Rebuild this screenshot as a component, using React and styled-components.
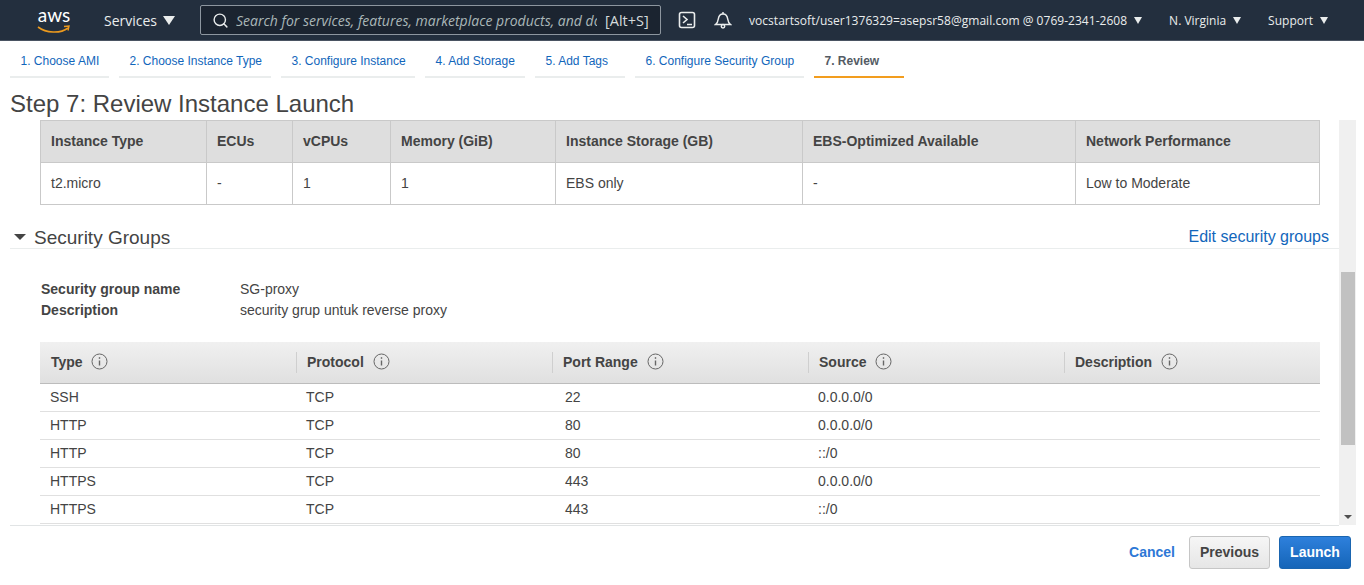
import React from "react";
import styled, { createGlobalStyle } from "styled-components";
import { Search } from "lucide-react";

const Global = createGlobalStyle`
  html, body { margin: 0; height: 585px; overflow: hidden; background: #fff; }
  body { font-family: "Liberation Sans", Arial, sans-serif; color: #444; }
  #root { height: 585px; display: flex; flex-direction: column; }
  * { box-sizing: border-box; }
`;

const NAV_FONT = `"Open Sans", "Noto Sans", sans-serif`;

const Nav = styled.header`
  height: 41px; flex: none; display: flex; align-items: center;
  background: #232f3e; border-bottom: 1px solid #4a5462;
  color: #eaeded; font-family: ${NAV_FONT};
`;
const Logo = styled.div`
  width: 34px; margin-left: 37px; height: 32px;
  display: flex; flex-direction: column; align-items: center;
`;
const LogoText = styled.span`
  font-family: "Lato", sans-serif; font-size: 19px; line-height: 20px; color: #fff;
  margin-top: 1px;
`;
const Menu = styled.div`
  display: flex; align-items: center; font-size: ${p => p.$size || 13}px; white-space: nowrap;
  margin-left: ${p => p.$left}px; gap: ${p => p.$gap || 7}px;
  letter-spacing: ${p => p.$track || 0}px;
`;
const Caret = styled.i`
  display: block; width: 0; height: 0;
  border-left: ${p => p.$w || 5}px solid transparent; border-right: ${p => p.$w || 5}px solid transparent;
  border-top: ${p => p.$h || 8}px solid #eaeded;
`;
const SearchBox = styled.div`
  width: 461px; height: 30px; margin-left: 25px; display: flex; align-items: center;
  background: #1b2430; border: 1px solid #8d969f; border-radius: 2px; padding-left: 11px;
`;
const Placeholder = styled.div`
  width: 361px; margin-left: 7px; overflow: hidden; white-space: nowrap;
  font-style: italic; font-size: 14px; color: #aab7b8;
`;
const Hint = styled.span`
  margin-left: 8px; font-size: 14.5px; color: #d5dbdb; white-space: nowrap;
`;
const IconSlot = styled.svg`
  display: block; flex: none; margin-left: ${p => p.$left}px;
`;

const Steps = styled.nav`
  flex: none; display: flex; gap: 10px; padding: 0 0 0 10px; height: 37px;
`;
const Step = styled.div`
  width: ${p => p.$w}px; height: 37px; padding: 13px 0 0 10.5px; font-size: 12px; line-height: 14px;
  white-space: nowrap; color: ${p => p.$active ? "#545b64" : "#1166bb"};
  font-weight: ${p => p.$active ? 700 : 400};
  border-bottom: 2px solid ${p => p.$active ? "#f29d1e" : "#eaeded"};
`;
const Title = styled.h1`
  flex: none; margin: 0; padding: 12px 0 0 10px; height: 42px; font-weight: 400; font-size: 24px;
  line-height: 28px; color: #444;
`;

const Body = styled.div`
  flex: none; height: 406px; display: flex; padding-left: 10px; padding-right: 8px;
`;
const Pane = styled.main`
  width: 1329px; height: 406px; overflow: hidden; border-bottom: 1px solid #e1e4e5;
`;
const Track = styled.div`
  width: 17px; height: 405px; background: #f0f0f0; display: flex; flex-direction: column; align-items: center;
`;
const Thumb = styled.div`
  width: 14px; height: 173px; margin-top: 152px; background: #c1c1c1;
`;
const TrackArrow = styled.i`
  display: block; width: 0; height: 0; margin-top: auto; margin-bottom: 6px;
  border-left: 4px solid transparent; border-right: 4px solid transparent; border-top: 4px solid #505050;
`;

const COLS1 = "165px 86px 98px 165px 247px 273px 1fr";
const SpecTable = styled.div`
  margin-left: 30px; width: 1280px; border: 1px solid #c9c9c9;
`;
const SpecRow = styled.div`
  display: grid; grid-template-columns: ${COLS1}; height: ${p => p.$h}px;
  background: ${p => p.$head ? "#dedede" : "#fff"};
  ${p => p.$head ? "border-bottom: 1px solid #c9c9c9;" : ""}
`;
const SpecCell = styled.div`
  display: flex; align-items: center; padding: 0 0 2px 10px; font-size: 14px;
  font-weight: ${p => p.$head ? 700 : 400};
  color: #444; border-left: 1px solid #c9c9c9;
  &:first-child { border-left: 0; }
`;

const SectionHead = styled.div`
  margin-top: 20px; height: 24px; display: flex; align-items: flex-start; border-bottom: 1px solid #eaeded;
`;
const SectionCaret = styled.i`
  display: block; width: 0; height: 0; margin: 9px 0 0 4px;
  border-left: 6px solid transparent; border-right: 6px solid transparent; border-top: 6px solid #444;
`;
const SectionTitle = styled.h2`
  margin: 2px 0 0 8px; font-weight: 400; font-size: 19px; line-height: 21px; color: #444;
`;
const EditLink = styled.a`
  margin: 2px 10px 0 auto; font-size: 16px; line-height: 20px; color: #1166bb;
`;
const Meta = styled.dl`
  margin: 32px 0 0 31px; display: grid; grid-template-columns: 199px 1fr; row-gap: 5px;
  font-size: 14px; line-height: 16px; color: #444;
  dt { font-weight: 700; margin: 0; } dd { margin: 0; }
`;

const COLS2 = "256px 256px 256px 256px 1fr";
const SgHead = styled.div`
  margin: 24px 0 0 30px; width: 1280px; height: 42px; display: grid; grid-template-columns: ${COLS2};
  align-items: center; background: linear-gradient(#f0f0f0, #e0e0e0);
  border-bottom: 1px solid #bcbcbc;
`;
const SgHeadCell = styled.div`
  height: 21px; display: flex; align-items: center; gap: ${p => p.$first ? 8 : 9}px;
  padding: 0 0 2px ${p => p.$first ? 11 : 10}px;
  font-size: 14px; font-weight: 700; color: #444;
  ${p => p.$first ? "" : "border-left: 1px solid #cfcfcf;"}
`;
const SgRow = styled.div`
  margin-left: 30px; width: 1280px; height: 28px; display: grid;
  grid-template-columns: 256px 259px 253px 256px 1fr; align-items: center;
  border-bottom: 1px solid #e0e0e0; padding-bottom: 2px;
  font-size: 14px; color: #444;
  & > span { padding-left: 10px; }
`;

const Footer = styled.footer`
  flex: 1; display: flex; align-items: flex-start; padding: 10px 13px 0 0; justify-content: flex-end;
`;
const CancelLink = styled.a`
  font-size: 14px; font-weight: 700; color: #2d78d6; margin: 8px 14px 0 0;
`;
const Button = styled.button`
  height: 33px; width: ${p => p.$w}px; margin-left: ${p => p.$left || 0}px; border-radius: 3px;
  font: 700 14px "Liberation Sans", Arial, sans-serif; padding: 0 0 1px;
  color: ${p => p.$primary ? "#fff" : "#444"};
  background: ${p => p.$primary ? "linear-gradient(#2e80dc, #1565b8)" : "linear-gradient(#f6f6f6, #e6e6e6)"};
  border: 1px solid ${p => p.$primary ? "#1a65b0" : "#c6c6c6"};
`;

const InfoIcon = () => (
  <svg width="17" height="17" viewBox="0 0 17 17" fill="none" stroke="#666" aria-hidden="true">
    <circle cx="8.5" cy="8.5" r="7.5" strokeWidth="1" />
    <path d="M8.5 7.5v5" strokeWidth="1.4" />
    <path d="M8.5 4.2v1.6" strokeWidth="1.4" />
  </svg>
);

const steps = [
  ["1. Choose AMI", 99], ["2. Choose Instance Type", 152], ["3. Configure Instance", 134],
  ["4. Add Storage", 100], ["5. Add Tags", 90], ["6. Configure Security Group", 169],
];
const specHead = ["Instance Type", "ECUs", "vCPUs", "Memory (GiB)", "Instance Storage (GB)", "EBS-Optimized Available", "Network Performance"];
const specRow = ["t2.micro", "-", "1", "1", "EBS only", "-", "Low to Moderate"];
const sgHead = ["Type", "Protocol", "Port Range", "Source", "Description"];
const rules = [
  ["SSH", "TCP", "22", "0.0.0.0/0"], ["HTTP", "TCP", "80", "0.0.0.0/0"], ["HTTP", "TCP", "80", "::/0"],
  ["HTTPS", "TCP", "443", "0.0.0.0/0"], ["HTTPS", "TCP", "443", "::/0"],
];

export default function App() {
  return (
    <>
      <Global />
      <Nav>
        <Logo>
          <LogoText>aws</LogoText>
          <svg width="34" height="9" viewBox="0 0 34 9" fill="none" stroke="#ec9a1e" strokeWidth="1.6" aria-hidden="true">
            <path d="M1 2c8 6 22 7 30 1" />
            <path d="M27 1.500l5-.5-1 4.500" strokeWidth="1.4" />
          </svg>
        </Logo>
        <Menu $left={33} $gap={6} $size={14}>Services <Caret $w={6} $h={9} /></Menu>
        <SearchBox>
          <Search size={17} color="#eaeded" strokeWidth={2} />
          <Placeholder>Search for services, features, marketplace products, and docs</Placeholder>
          <Hint>[Alt+S]</Hint>
        </SearchBox>
        <IconSlot $left={17} width="18" height="18" viewBox="0 0 18 18" fill="none" stroke="#eaeded" strokeWidth="1.6" aria-hidden="true">
          <rect x="1.500" y="1.500" width="15" height="15" rx="2" />
          <path d="M5 5l4 3.500L5 12M9 13.500h5" />
        </IconSlot>
        <IconSlot $left={18} width="18" height="18" viewBox="0 0 18 18" fill="none" stroke="#eaeded" strokeWidth="1.5" aria-hidden="true">
          <path d="M1.500 13.500c2-1.500 2.500-3 2.800-5.500C4.700 5 6.500 3 9 3s4.300 2 4.700 5c.3 2.500.8 4 2.800 5.500z" />
          <path d="M9 1v2" />
          <circle cx="9" cy="15.200" r="1.700" />
        </IconSlot>
        <Menu $left={17} $gap={7} $size={12} $track={0.03}>vocstartsoft/user1376329=asepsr58@gmail.com @ 0769-2341-2608 <Caret $w={4.500} $h={7} /></Menu>
        <Menu $left={27} $gap={7} $size={12}>N. Virginia <Caret $w={4.500} $h={7} /></Menu>
        <Menu $left={27} $gap={7} $size={12}>Support <Caret $w={4.500} $h={7} /></Menu>
      </Nav>
      <Steps>
        {steps.map(([label, w]) => <Step key={label} $w={w}>{label}</Step>)}
        <Step $w={90} $active>7. Review</Step>
      </Steps>
      <Title>Step 7: Review Instance Launch</Title>
      <Body>
        <Pane>
          <SpecTable>
            <SpecRow $head $h={42}>{specHead.map(t => <SpecCell key={t} $head>{t}</SpecCell>)}</SpecRow>
            <SpecRow $h={41}>{specRow.map((t, i) => <SpecCell key={i}>{t}</SpecCell>)}</SpecRow>
          </SpecTable>
          <SectionHead>
            <SectionCaret />
            <SectionTitle>Security Groups</SectionTitle>
            <EditLink>Edit security groups</EditLink>
          </SectionHead>
          <Meta>
            <dt>Security group name</dt><dd>SG-proxy</dd>
            <dt>Description</dt><dd>security grup untuk reverse proxy</dd>
          </Meta>
          <SgHead>
            {sgHead.map((t, i) => <SgHeadCell key={t} $first={i === 0}>{t} <InfoIcon /></SgHeadCell>)}
          </SgHead>
          {rules.map((r, i) => (
            <SgRow key={i}>{r.map((c, j) => <span key={j}>{c}</span>)}<span /></SgRow>
          ))}
        </Pane>
        <Track><Thumb /><TrackArrow /></Track>
      </Body>
      <Footer>
        <CancelLink>Cancel</CancelLink>
        <Button $w={81}>Previous</Button>
        <Button $w={72} $left={9} $primary>Launch</Button>
      </Footer>
    </>
  );
}
